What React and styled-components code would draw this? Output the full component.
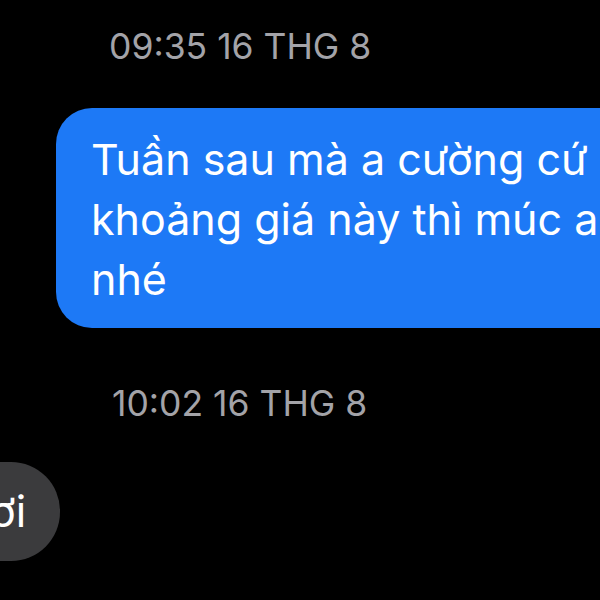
import React from "react";
import styled, { createGlobalStyle } from "styled-components";

const Global = createGlobalStyle`
  html, body {
    margin: 0;
    padding: 0;
    background: #000000;
  }
  body {
    font-family: Inter, "Noto Sans", "Liberation Sans", sans-serif;
  }
`;

const Screen = styled.div`
  width: 600px;
  height: 600px;
  overflow: hidden;
  background: #000000;
  display: flex;
  flex-direction: column;
`;

const Stamp = styled.div`
  color: #a3a3a8;
  font-size: 35.5px;
  line-height: 40px;
  padding-left: ${(p) => p.$left}px;
  margin-top: ${(p) => p.$top}px;
  white-space: nowrap;
`;

const Row = styled.div`
  display: flex;
  margin-top: ${(p) => p.$top}px;
`;

const Bubble = styled.div`
  background: ${(p) => (p.$mine ? "#1d79f6" : "#3b3b3d")};
  color: #ffffff;
  font-size: 43px;
  line-height: 60px;
  white-space: nowrap;
  flex-shrink: 0;
  border-radius: ${(p) => (p.$mine ? "36px" : "49px")};
  padding: ${(p) => (p.$mine ? "21px 120px 19px 35px" : "19px 34px 20px 60px")};
  margin-left: ${(p) => p.$left}px;
`;

export default function App() {
  return (
    <>
      <Global />
      <Screen>
        <Stamp $left={109} $top={27}>09:35 16 THG 8</Stamp>
        <Row $top={41}>
          <Bubble $mine $left={56}>
            Tuần sau mà a cường cứ
            <br />
            khoảng giá này thì múc a
            <br />
            nhé
          </Bubble>
        </Row>
        <Stamp $left={112} $top={56}>10:02 16 THG 8</Stamp>
        <Row $top={38}>
          <Bubble $left={-70}>ơi</Bubble>
        </Row>
      </Screen>
    </>
  );
}
